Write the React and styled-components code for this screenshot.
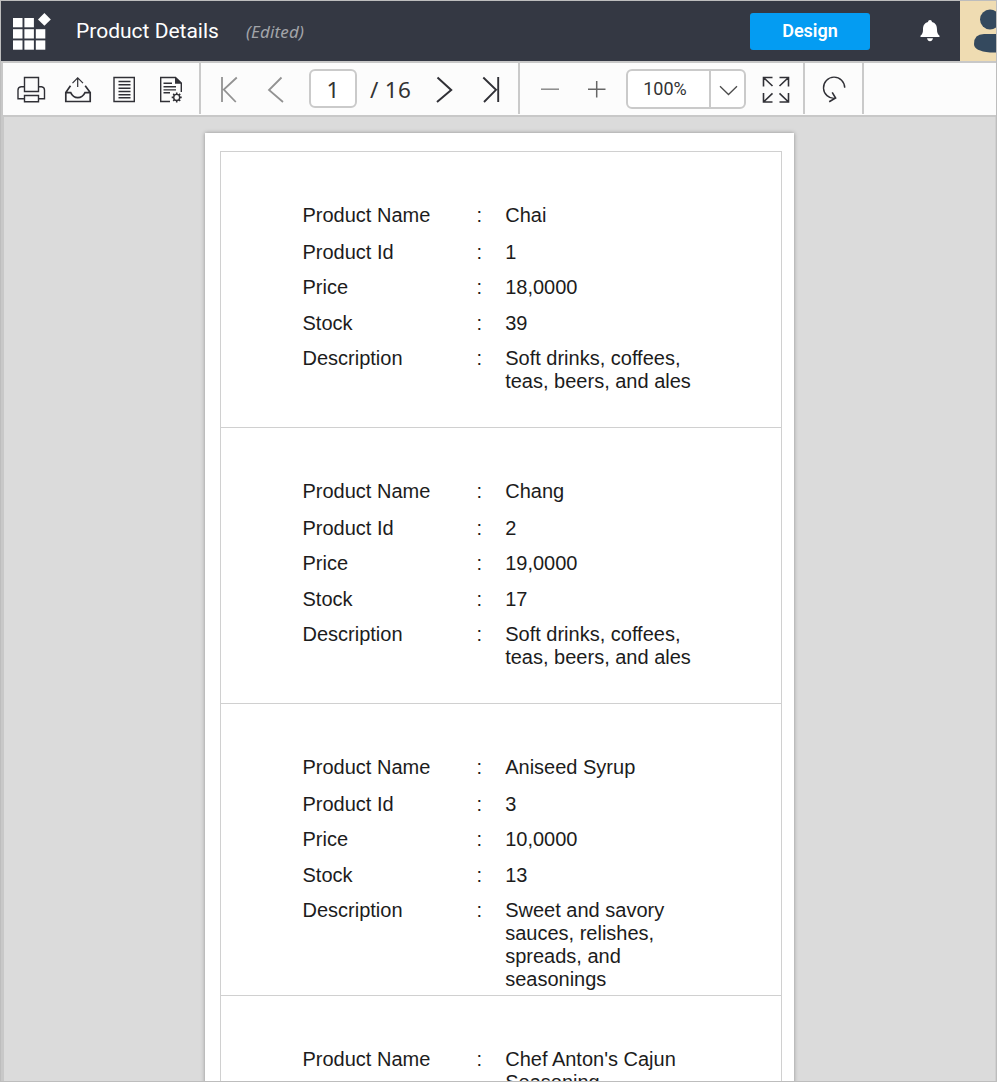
import React from "react";
import styled, { createGlobalStyle, css } from "styled-components";

const GlobalStyle = createGlobalStyle`
  * { box-sizing: border-box; }
  body { margin: 0; overflow: hidden; }
`;

const Frame = styled.div`
  width: 997px;
  height: 1082px;
  display: flex;
  flex-direction: column;
  border: 1px solid #bdbdbd;
  background: #dbdbdb;
  overflow: hidden;
`;

const Header = styled.header`
  flex: none;
  height: 60px;
  display: flex;
  align-items: center;
  background: #343843;
`;

const Logo = styled.svg`
  flex: none;
  width: 40px;
  height: 40px;
  margin-left: 11px;
`;

const Title = styled.h1`
  margin: 0 0 0 24px;
  width: 170px;
  font: 400 21px/30px Roboto, sans-serif;
  color: #fff;
`;

const Edited = styled.span`
  flex: 1;
  padding-top: 2px;
  font: italic 400 17px/24px "Noto Sans", sans-serif;
  letter-spacing: 0.15px;
  color: #a2a4a9;
`;

const DesignButton = styled.button`
  width: 120px;
  height: 37px;
  padding: 0 0 1px;
  border: 0;
  border-radius: 3px;
  background: #049cf2;
  color: #fff;
  font: 600 18px/34px Roboto, sans-serif;
`;

const Bell = styled.svg`
  flex: none;
  width: 24px;
  height: 24px;
  margin: 0 18px 0 48px;
`;

const Avatar = styled.svg`
  flex: none;
  width: 36px;
  height: 60px;
  background: #efdcb2;
`;

const Toolbar = styled.div`
  flex: none;
  height: 56px;
  display: flex;
  align-items: flex-start;
  border: 2px solid #c8c8c8;
  border-right-width: 0;
  background: #fcfcfc;
`;

const Group = styled.div`
  flex: none;
  width: ${(p) => p.$width}px;
  height: 51px;
  display: flex;
  align-items: flex-start;
  padding-left: ${(p) => p.$inset || 0}px;
  border-right: 2px solid #cacaca;
`;

const ToolIcon = styled.svg`
  flex: none;
  display: block;
  width: ${(p) => p.$width}px;
  height: 51px;
  fill: none;
  stroke: ${(p) => (p.$muted ? "#929292" : "#303036")};
  stroke-width: ${(p) => p.$weight || 1.4};
`;

const field = css`
  flex: none;
  height: 39px;
  margin-top: 6px;
  border: 2px solid #cacaca;
  border-radius: 6px;
  background: #fff;
  color: #333;
`;

const PageField = styled.div`
  ${field}
  width: 48px;
  font: 400 22.5px/37px "Noto Sans", sans-serif;
  text-align: center;
`;

const PageTotal = styled.span`
  flex: none;
  width: 64px;
  padding-left: 13px;
  font: 400 22.5px/53px "Noto Sans", sans-serif;
  letter-spacing: 0.3px;
  color: #333;
  white-space: nowrap;
`;

const ZoomField = styled.div`
  ${field}
  width: 120px;
  height: 40px;
  display: flex;
`;

const ZoomValue = styled.span`
  width: 83px;
  padding-right: 7px;
  border-right: 2px solid #cacaca;
  font: 400 18px/36px Roboto, sans-serif;
  text-align: center;
`;

const Chevron = styled.svg`
  width: 33px;
  height: 36px;
  fill: none;
  stroke: #4c4c4c;
  stroke-width: 1.3;
`;

const Viewer = styled.main`
  flex: 1;
  min-height: 0;
  display: flex;
  align-items: flex-start;
  border-left: 3px solid #c8c8c8;
  border-right: 1px solid #d0d0d0;
  padding: 16px 0 0 201px;
  overflow: hidden;
`;

const Sheet = styled.section`
  flex: none;
  width: 589px;
  min-height: 1000px;
  padding: 18px 12px 0 15px;
  background: #fff;
  box-shadow: 0 0 4px rgba(0, 0, 0, 0.35);
`;

const Records = styled.div`
  border: 1px solid #d0d0d0;
`;

const Record = styled.article`
  min-height: 276px;
  padding: 52px 0 4px 81.5px;
  border-bottom: 1px solid #d0d0d0;
  font: 400 20px/23px "Liberation Sans", Arial, sans-serif;
  color: #1c1c1c;
`;

const Field = styled.div`
  display: grid;
  grid-template-columns: 174px 28.7px 200px;
  padding-bottom: ${(p) => p.$gap}px;
`;

const Cell = styled.span``;

const GAPS = [14, 12, 13, 12, 0];
const LABELS = ["Product Name", "Product Id", "Price", "Stock", "Description"];
const PRODUCTS = [
  ["Chai", "1", "18,0000", "39", "Soft drinks, coffees, teas, beers, and ales"],
  ["Chang", "2", "19,0000", "17", "Soft drinks, coffees, teas, beers, and ales"],
  ["Aniseed Syrup", "3", "10,0000", "13", "Sweet and savory sauces, relishes, spreads, and seasonings"],
  ["Chef Anton's Cajun Seasoning"],
];

function GridLogo() {
  const cells = [[0, 0], [1, 0], [0, 1], [1, 1], [2, 1], [0, 2], [1, 2], [2, 2]];
  return (
    <Logo viewBox="12 11 40 40" fill="#fff">
      {cells.map(([c, r]) => (
        <rect key={`${c}${r}`} x={13 + c * 11.4} y={18 + r * 11.2} width="9.5" height="9.3" />
      ))}
      <path d="M44.4 13 50.8 19.4 44.4 25.8 38 19.4Z" />
    </Logo>
  );
}

function DocumentTools() {
  return (
    <Group $width={198} $inset={5}>
      <ToolIcon $width={46} viewBox="8 63 46 51">
        <path d="M24.5 77.5H38.5V91.5H24.5ZM24.5 86.7H21Q18 87 18 90V98.8H24.5M38.5 86.7H41.5Q44.5 87 44.5 90V98.8H38.5M24.5 95.5H38.5V101.8H24.5Z" />
      </ToolIcon>
      <ToolIcon $width={47} viewBox="54 63 47 51">
        <path strokeWidth="1.2" d="M77.7 87V77.8M72.5 83.2 77.7 77.8 83 83.2" />
        <path strokeWidth="1.7" d="M70.5 85.8 65.8 92.5V101.5H90.2V92.5L85.2 85.8M65.8 92.6H70.7Q73 97.6 77.8 97.6T85 92.6H90.2" />
      </ToolIcon>
      <ToolIcon $width={46} viewBox="101 63 46 51">
        <path d="M114 77.5H134.3V101.5H114Z" />
        <path strokeWidth="1.5" d="M118.5 81.6H130.5M118.5 84.8H130.5M118.5 88.2H130.5M118.5 91.5H130.5M118.5 94.7H130.5M118.5 97.8H130.5" />
      </ToolIcon>
      <ToolIcon $width={47} viewBox="147 63 47 51">
        <path d="M170 101.5H160.7V77.5H175.5L181.3 83V92" />
        <path fill="#303036" stroke="none" d="M175 77 182 83.7H175Z" />
        <path d="M163.5 83.2H172M163.5 86.8H176M163.5 89.9H176M163.5 92.8H170" />
        <circle cx="176.7" cy="97.4" r="3" />
        <path strokeWidth="1.6" d="M176.7 92.4V94.2M176.7 100.6V102.4M171.7 97.4H173.5M179.9 97.4H181.7M173.2 93.9 174.4 95.1M179 99.7 180.2 100.9M180.2 93.9 179 95.1M174.4 99.7 173.2 100.9" />
      </ToolIcon>
    </Group>
  );
}

function PageTools() {
  return (
    <Group $width={319}>
      <ToolIcon $width={54} $muted $weight={1.8} viewBox="201 63 54 51">
        <path d="M222 77V102M236.8 77.5 223.8 89.5 235.8 102" />
      </ToolIcon>
      <ToolIcon $width={54} $muted $weight={1.8} viewBox="255 63 54 51">
        <path d="M281.5 77.5 269 90 283 102" />
      </ToolIcon>
      <PageField>1</PageField>
      <PageTotal>/ 16</PageTotal>
      <ToolIcon $width={47} $weight={2} viewBox="421 63 47 51">
        <path d="M437.5 77.5 451.2 90 437 102" />
      </ToolIcon>
      <ToolIcon $width={50} $weight={1.9} viewBox="468 63 50 51">
        <path d="M483.3 77.5 496 89.8 484 102M498.2 77V102" />
      </ToolIcon>
    </Group>
  );
}

function ZoomTools() {
  return (
    <Group $width={285}>
      <ToolIcon $width={53} $weight={1.5} viewBox="520 63 53 51">
        <path stroke="#8a8a8a" d="M541 89.2H559" />
      </ToolIcon>
      <ToolIcon $width={53} $weight={1.5} viewBox="573 63 53 51">
        <path stroke="#666" d="M588 89.2H605.5M596.7 81V97.5" />
      </ToolIcon>
      <ZoomField>
        <ZoomValue>100%</ZoomValue>
        <Chevron viewBox="711 71 33 36">
          <path d="M720 86.3 728.5 94.5 737 86.3" />
        </Chevron>
      </ZoomField>
      <ToolIcon $width={57} $weight={1.6} viewBox="746 63 57 51">
        <path d="M763.5 86.5V77.5H772.5M763.5 77.5 772.5 86M779.5 77.5H788.5V86.5M788.5 77.5 779.5 86M763.5 93V102H772.5M763.5 102 772.5 93.3M779.5 102H788.5V93M788.5 102 779.5 93.3" />
      </ToolIcon>
    </Group>
  );
}

function RefreshTools() {
  return (
    <Group $width={59}>
      <ToolIcon $width={57} $weight={1.4} viewBox="805 63 57 51">
        <path d="M844.7 87.8A10.6 10.6 0 1 0 834.8 98.3" />
        <path strokeWidth="1.6" d="M832.2 92.4 835.6 98 829.2 101.8" />
      </ToolIcon>
    </Group>
  );
}

export default function App() {
  return (
    <Frame>
      <GlobalStyle />
      <Header>
        <GridLogo />
        <Title>Product Details</Title>
        <Edited>(Edited)</Edited>
        <DesignButton>Design</DesignButton>
        <Bell viewBox="918 19 24 24" fill="#fff">
          <path d="M930 20C931.2 20 931.8 20.8 932 22C935.8 23 937 26 937 29.5C937 32.5 937.5 34 939.5 35.7V37H920.5V35.7C922.5 34 923 32.5 923 29.5C923 26 924.2 23 928 22C928.2 20.8 928.8 20 930 20ZM927 38.3H933Q932.3 41.3 930 41.3T927 38.3Z" />
        </Bell>
        <Avatar viewBox="960 1 36 60" fill="#34495e">
          <circle cx="990" cy="19.5" r="10" />
          <path d="M974 44Q974 34 984 34H1000V52.5H990Q974 51 974 44Z" />
        </Avatar>
      </Header>
      <Toolbar>
        <DocumentTools />
        <PageTools />
        <ZoomTools />
        <RefreshTools />
      </Toolbar>
      <Viewer>
        <Sheet>
          <Records>
            {PRODUCTS.map((product) => (
              <Record key={product[0]}>
                {product.map((value, i) => (
                  <Field key={LABELS[i]} $gap={GAPS[i]}>
                    <Cell>{LABELS[i]}</Cell>
                    <Cell>:</Cell>
                    <Cell>{value}</Cell>
                  </Field>
                ))}
              </Record>
            ))}
          </Records>
        </Sheet>
      </Viewer>
    </Frame>
  );
}
